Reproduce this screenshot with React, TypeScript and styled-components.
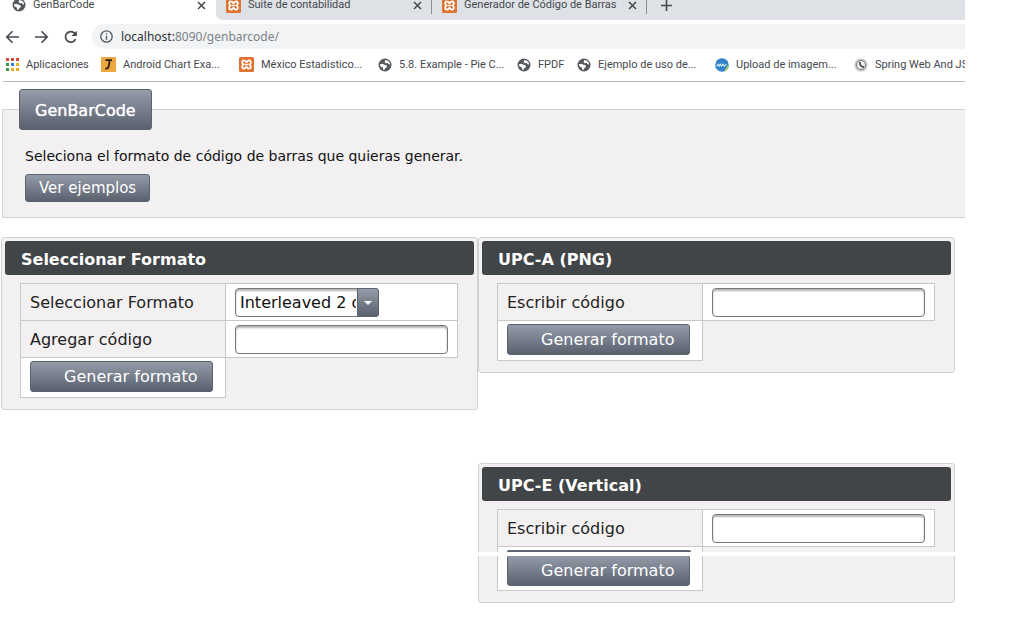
import React, { useId } from 'react';
import styled, { createGlobalStyle, css } from 'styled-components';

const pageFont = css`
  font-family: 'DejaVu Sans', Verdana, sans-serif;
`;

const GlobalStyle = createGlobalStyle`
  *, *::before, *::after { box-sizing: border-box; }
  body { margin: 0; background: #fff; color: #222; overflow-x: hidden; }
  button, input, select { font: inherit; color: inherit; margin: 0; }
  svg { flex: none; }
`;

const Screen = styled.div`
  margin-right: 58px;
  padding-bottom: 24px;
  overflow: hidden;
  ${pageFont}
  font-size: 16px;
`;

/* ---------- browser frame ---------- */

const Browser = styled.header`
  font-family: Roboto, 'Segoe UI', sans-serif;
  font-size: 11px;
  color: #45484d;
`;

const TabStrip = styled.nav`
  display: flex;
  height: 20px;
  overflow: hidden;
  line-height: 10px;
`;

const Tab = styled.div`
  display: flex;
  align-items: center;
  gap: 7px;
  height: 10px;
`;

const ActiveTab = styled(Tab)`
  width: 216px;
  padding: 0 10px 0 12px;
`;

const OtherTabs = styled.div`
  flex: 1;
  display: flex;
  padding-left: 10px;
  background: #dee1e6;
  border-bottom-left-radius: 7px;
`;

const IdleTab = styled(Tab)<{ $width: number }>`
  width: ${(p) => p.$width}px;
  height: 14px;
  padding: 0 10px 4px 0;
  margin-right: 10px;
  position: relative;

  &::after {
    content: '';
    position: absolute;
    right: 0;
    top: 0;
    width: 1px;
    height: 14px;
    background: #8b8e93;
  }
`;

const TabLink = styled.a`
  flex: 1;
  color: inherit;
  text-decoration: none;
  white-space: nowrap;
`;

const IconButton = styled.button`
  display: flex;
  align-items: center;
  justify-content: center;
  padding: 0;
  border: 0;
  background: none;
  color: #45484d;
`;

const NewTab = styled(Tab)`
  padding-left: 4px;
`;

const AddressRow = styled.div`
  display: flex;
  align-items: center;
  gap: 13px;
  padding: 4px 0 0 5px;
`;

const AddressBar = styled.div`
  flex: 1;
  display: flex;
  align-items: center;
  gap: 8px;
  height: 25px;
  padding-left: 8px;
  background: #f1f3f4;
  border-radius: 13px 0 0 13px;
  color: #7d8186;
  font-family: 'Noto Sans', 'Segoe UI', sans-serif;
  font-size: 12px;
`;

const Host = styled.span`
  color: #303236;
`;

const Bookmarks = styled.nav`
  display: flex;
  height: 33px;
  margin-left: 3px;
  padding: 0 0 1px 3px;
  border-bottom: 1px solid #b9babc;
  overflow: hidden;
`;

const Bookmark = styled.a<{ $width: number }>`
  flex: none;
  display: flex;
  align-items: center;
  gap: 7px;
  width: ${(p) => p.$width}px;
  color: inherit;
  text-decoration: none;
  white-space: nowrap;
`;

/* ---------- page ---------- */

const gradientFace = css`
  border: 1px solid #5c6370;
  border-radius: 3px;
  background: linear-gradient(#949ba9, #59606e);
  color: #fff;
`;

const Intro = styled.fieldset`
  margin: 7px 0 0 2px;
  min-width: 0;
  padding: 0 0 15px 22px;
  border: 1px solid #d2d2d2;
  border-right: 0;
  background: #f2f0f1;
`;

const Legend = styled.legend`
  margin-left: -6px;
  padding: 0;
`;

const LegendButton = styled.button`
  ${gradientFace}
  display: block;
  height: 41px;
  padding: 2px 15px 0;
  text-shadow: 0 0 1px #fff;
`;

const IntroText = styled.p`
  margin: 15px 0 7px;
  font-size: 14px;
  line-height: 22px;
  color: #111;
`;

const ExamplesButton = styled.button`
  ${gradientFace}
  display: block;
  height: 28px;
  padding: 0 13px;
  font-size: 15px;
`;

const Panels = styled.main`
  display: grid;
  grid-template-columns: 1fr 1fr;
  align-items: start;
  margin-top: 19px;
  padding: 0 10px 0 1px;
`;

const Column = styled.div`
  display: flex;
  flex-direction: column;
  gap: 90px;
`;

const PanelBox = styled.section`
  position: relative;
  padding: 3px 3px 11px;
  border: 1px solid #d2d2d2;
  border-radius: 3px;
  background: #f2f0f1;
`;

const PanelTitle = styled.h2`
  margin: 0 0 8px;
  padding: 4px 16px 0;
  border-radius: 3px;
  background: #414548;
  color: #fff;
  font-size: 16px;
  line-height: 30px;
`;

const Grid = styled.table`
  width: calc(100% - 31px);
  margin: 0 16px 0 15px;
  border-collapse: collapse;
  table-layout: fixed;
`;

const LabelCell = styled.th`
  width: 205px;
  height: 37px;
  padding: 0 9px;
  border: 1px solid #c8c8c8;
  font-weight: normal;
  text-align: left;
`;

const FieldCell = styled.td`
  padding: 4px 9px 3px;
  border: 1px solid #c8c8c8;
  background: #fff;
`;

const ActionCell = styled.td<{ $split?: boolean }>`
  padding: ${(p) => (p.$split ? '8px 9px 4px' : '3px 9px 5px')};
  border: 1px solid #c8c8c8;
  background: #fff;
`;

const fieldFace = css`
  display: block;
  height: 29px;
  border: 1px solid #76787b;
  border-radius: 4px;
  background: #fff;
  box-shadow: inset 0 2px 2px #b4b4b4;
  outline: 0;
`;

const TextField = styled.input`
  ${fieldFace}
  width: 100%;
  padding: 0 4px;
`;

const SelectBox = styled.div`
  position: relative;
  width: 144px;
`;

const Select = styled.select`
  ${fieldFace}
  appearance: none;
  width: 100%;
  padding: 0 22px 0 4px;
  color: #111;
`;

const SelectArrow = styled.span`
  ${gradientFace}
  position: absolute;
  top: 0;
  right: 0;
  display: flex;
  align-items: center;
  justify-content: center;
  width: 22px;
  height: 29px;
  border-radius: 0 3px 3px 0;
  pointer-events: none;
`;

const GenerateButton = styled.button`
  ${gradientFace}
  display: block;
  height: 31px;
  padding: 0 15px 0 33px;
`;

const Seam = styled.div`
  position: absolute;
  top: 88px;
  left: -1px;
  right: -1px;
  height: 4px;
  background: #fff;

  &::before {
    content: '';
    position: absolute;
    top: -2px;
    left: 29px;
    width: 184px;
    height: 2px;
    background: #5c6370;
    border-radius: 2px 2px 0 0;
  }
`;

/* ---------- icons ---------- */

const Globe = () => (
  <svg width="14" height="14" viewBox="0 0 14 14" aria-hidden="true">
    <circle cx="7" cy="7" r="6.5" fill="#55585d" />
    <path d="M7.400 2 10 2.700 11.800 4.800 12 6.600 10.600 6.200 9.800 5 7.800 5.200 6.600 4 7 2.800Z" fill="#fff" />
    <path d="M2 6.200 4.800 5.800 6.200 6.800 8.200 7 9 8.400 8.200 9.800 6.800 10.400 6.400 12 5.200 11.800 4.900 9.400 3.400 9 2.200 8Z" fill="#fff" />
  </svg>
);

const Xampp = () => (
  <svg width="15" height="15" viewBox="0 0 15 15" aria-hidden="true">
    <rect width="15" height="15" rx="1.5" fill="#e07330" />
    <path d="M5 3.3A1.9 1.9 0 0 0 3.3 6L4.3 7.5 3.3 9A1.9 1.9 0 0 0 5 11.7C6.8 11.7 6.6 9.8 7.5 9.8S8.200 11.7 10 11.7A1.900 1.900 0 0 0 11.700 9L10.700 7.500 11.700 6A1.900 1.900 0 0 0 10 3.300C8.200 3.300 8.400 5.200 7.500 5.200S6.800 3.300 5 3.300Z" fill="none" stroke="#fff" strokeWidth="1.7" />
    <path d="M5.500 7.500H9.500" stroke="#fff" strokeWidth="1.500" />
  </svg>
);

const Apps = () => {
  const colors = ['#d9493c', '#d9493c', '#d9493c', '#3d9a50', '#3f78d8', '#e8b021', '#3d9a50', '#e8b021', '#e8b021'];
  return (
    <svg width="13" height="13" viewBox="0 0 13 13" aria-hidden="true">
      {colors.map((c, i) => (
        <rect key={i} x={(i % 3) * 5} y={Math.floor(i / 3) * 5} width="3" height="3" fill={c} />
      ))}
    </svg>
  );
};

const JavaGeek = () => (
  <svg width="15" height="15" viewBox="0 0 15 15" aria-hidden="true">
    <rect width="15" height="15" rx="1" fill="#eda740" />
    <path d="M4.500 3.200H11M8.800 3.200 7.600 9.800Q7 12 4.400 11.300" fill="none" stroke="#2b2114" strokeWidth="1.800" />
  </svg>
);

const BlueBall = () => (
  <svg width="14" height="14" viewBox="0 0 13 13" aria-hidden="true">
    <circle cx="6.500" cy="6.500" r="6.300" fill="#2f83c6" />
    <path d="M9 11.500Q11.800 10 12.200 7" fill="none" stroke="#9fd06a" strokeWidth="1.500" />
    <path d="M1.500 7.500 3 5.800 4 7.500 5 5.800 6.200 7.500 7.400 5.800 8.600 7.500 10.500 5.800" fill="none" stroke="#d6e9f6" strokeWidth="1.100" />
  </svg>
);

const Spiral = () => (
  <svg width="14" height="14" viewBox="0 0 14 14" aria-hidden="true">
    <circle cx="7" cy="7" r="6.600" fill="#c9c9c9" />
    <circle cx="7" cy="7" r="4.500" fill="#f1f1f1" stroke="#77797c" strokeWidth="1" />
    <path d="M6 3.800Q5.200 8.600 10 9.200" fill="none" stroke="#4a4c50" strokeWidth="1.700" />
  </svg>
);

const Cross = () => (
  <svg width="9" height="9" viewBox="0 0 9 9" aria-hidden="true">
    <path d="M1 1 8 8M8 1 1 8" stroke="currentColor" strokeWidth="1.500" />
  </svg>
);

const Plus = () => (
  <svg width="11" height="11" viewBox="0 0 11 11" aria-hidden="true">
    <path d="M5.500 0V11M0 5.500H11" stroke="currentColor" strokeWidth="1.600" />
  </svg>
);

const Arrow = ({ forward = false }: { forward?: boolean }) => (
  <svg width="16" height="14" viewBox="0 0 16 14" aria-hidden="true">
    <path
      d={forward ? 'M1 7H13M7.500 1.200 13.200 7 7.500 12.800' : 'M14 7H2M7.500 1.200 1.800 7 7.500 12.800'}
      fill="none"
      stroke="currentColor"
      strokeWidth="1.600"
    />
  </svg>
);

const Reload = () => (
  <svg width="16" height="14" viewBox="0 0 16 14" aria-hidden="true">
    <path d="M12.600 9.200A5.300 5.300 0 1 1 11.800 3.400L13 4.600" fill="none" stroke="currentColor" strokeWidth="1.700" />
    <path d="M13.800 0.800V6H8.600Z" fill="currentColor" />
  </svg>
);

const Info = () => (
  <svg width="13" height="13" viewBox="0 0 13 13" aria-hidden="true">
    <circle cx="6.500" cy="6.500" r="5.700" fill="none" stroke="#55585d" strokeWidth="1.300" />
    <path d="M6.500 5.700V9.800M6.500 3.200V4.600" stroke="#55585d" strokeWidth="1.400" />
  </svg>
);

/* ---------- composition ---------- */

const bookmarks = [
  { label: 'Aplicaciones', icon: <Apps />, width: 95 },
  { label: 'Android Chart Exa...', icon: <JavaGeek />, width: 138 },
  { label: 'México Estadistico...', icon: <Xampp />, width: 139 },
  { label: '5.8. Example - Pie C...', icon: <Globe />, width: 139 },
  { label: 'FPDF', icon: <Globe />, width: 60 },
  { label: 'Ejemplo de uso de...', icon: <Globe />, width: 138 },
  { label: 'Upload de imagem...', icon: <BlueBall />, width: 139 },
  { label: 'Spring Web And JSF', icon: <Spiral />, width: 139 },
];

const BarcodePanel = ({ title, label, withFormat = false, split = false }: {
  title: string;
  label: string;
  withFormat?: boolean;
  split?: boolean;
}) => {
  const id = useId();
  return (
    <PanelBox>
      <PanelTitle>{title}</PanelTitle>
      <Grid>
        <tbody>
          {withFormat && (
            <tr>
              <LabelCell scope="row">
                <label htmlFor={id + 'format'}>Seleccionar Formato</label>
              </LabelCell>
              <FieldCell>
                <SelectBox>
                  <Select id={id + 'format'}>
                    <option>Interleaved 2 of 5</option>
                  </Select>
                  <SelectArrow>
                    <svg width="8" height="4" viewBox="0 0 8 4" aria-hidden="true">
                      <path d="M0 0H8L4 4Z" fill="#fff" />
                    </svg>
                  </SelectArrow>
                </SelectBox>
              </FieldCell>
            </tr>
          )}
          <tr>
            <LabelCell scope="row">
              <label htmlFor={id + 'code'}>{label}</label>
            </LabelCell>
            <FieldCell>
              <TextField id={id + 'code'} type="text" />
            </FieldCell>
          </tr>
          <tr>
            <ActionCell $split={split}>
              <GenerateButton type="button">Generar formato</GenerateButton>
            </ActionCell>
          </tr>
        </tbody>
      </Grid>
      {split && <Seam />}
    </PanelBox>
  );
};

export default function App() {
  return (
    <Screen>
      <GlobalStyle />
      <Browser>
        <TabStrip>
          <ActiveTab>
            <Globe />
            <TabLink href="#">GenBarCode</TabLink>
            <IconButton type="button" aria-label="Cerrar"><Cross /></IconButton>
          </ActiveTab>
          <OtherTabs>
            <IdleTab $width={206}>
              <Xampp />
              <TabLink href="#">Suite de contabilidad</TabLink>
              <IconButton type="button" aria-label="Cerrar"><Cross /></IconButton>
            </IdleTab>
            <IdleTab $width={205}>
              <Xampp />
              <TabLink href="#">Generador de Código de Barras</TabLink>
              <IconButton type="button" aria-label="Cerrar"><Cross /></IconButton>
            </IdleTab>
            <NewTab>
              <IconButton type="button" aria-label="Nueva pestaña"><Plus /></IconButton>
            </NewTab>
          </OtherTabs>
        </TabStrip>
        <AddressRow>
          <IconButton type="button" aria-label="Atrás"><Arrow /></IconButton>
          <IconButton type="button" aria-label="Adelante"><Arrow forward /></IconButton>
          <IconButton type="button" aria-label="Recargar"><Reload /></IconButton>
          <AddressBar>
            <Info />
            <span><Host>localhost:</Host>8090/genbarcode/</span>
          </AddressBar>
        </AddressRow>
        <Bookmarks>
          {bookmarks.map((b) => (
            <Bookmark key={b.label} href="#" $width={b.width}>
              {b.icon}
              {b.label}
            </Bookmark>
          ))}
        </Bookmarks>
      </Browser>

      <Intro>
        <Legend><LegendButton type="button">GenBarCode</LegendButton></Legend>
        <IntroText>Seleciona el formato de código de barras que quieras generar.</IntroText>
        <ExamplesButton type="button">Ver ejemplos</ExamplesButton>
      </Intro>

      <Panels>
        <Column>
          <BarcodePanel title="Seleccionar Formato" label="Agregar código" withFormat />
        </Column>
        <Column>
          <BarcodePanel title="UPC-A (PNG)" label="Escribir código" />
          <BarcodePanel title="UPC-E (Vertical)" label="Escribir código" split />
        </Column>
      </Panels>
    </Screen>
  );
}
